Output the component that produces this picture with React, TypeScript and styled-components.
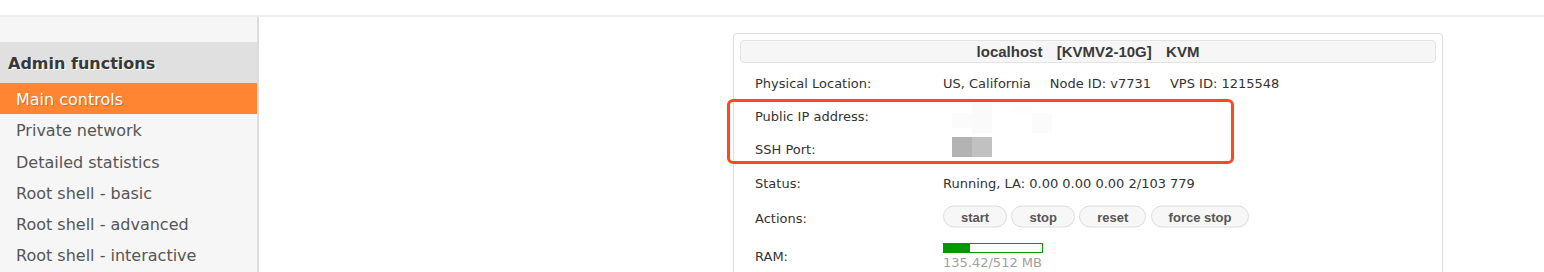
import React from "react";
import styled, { createGlobalStyle } from "styled-components";

const GlobalStyle = createGlobalStyle`
  html, body { margin: 0; padding: 0; background: #ffffff; }
  body { font-family: "DejaVu Sans", Verdana, sans-serif; color: #333; }
  * { box-sizing: border-box; }
`;

const Page = styled.div`
  width: 1544px;
  height: 272px;
  overflow: hidden;
  display: flex;
  flex-direction: column;
`;

const TopBar = styled.div`
  height: 17px;
  flex: none;
  border-bottom: 2px solid #eeeeee;
  background: #ffffff;
`;

const Body = styled.div`
  flex: 1;
  display: flex;
  min-height: 0;
`;

const Sidebar = styled.nav`
  width: 259px;
  flex: none;
  background: #f6f6f6;
  border-right: 2px solid #dddddd;
  padding-top: 25px;
`;

const SideHeading = styled.div`
  height: 41px;
  line-height: 41px;
  padding-top: 1px;
  padding-left: 8px;
  background: #e0e0e0;
  font-size: 16px;
  font-weight: bold;
  color: #383838;
  text-shadow: 1px 1px 0 #ffffff;
  white-space: nowrap;
`;

const SideItem = styled.div<{ $active?: boolean }>`
  height: 31.3px;
  line-height: 31px;
  padding-top: 1px;
  padding-left: 16px;
  font-size: 16px;
  white-space: nowrap;
  color: ${(p) => (p.$active ? "#ffffff" : "#555555")};
  background: ${(p) => (p.$active ? "#ff8533" : "transparent")};
  text-shadow: ${(p) => (p.$active ? "1px 1px 0 rgba(120,50,0,0.35)" : "none")};
`;

const Main = styled.main`
  flex: 1;
  padding-top: 16px;
  padding-left: 474px;
`;

const Panel = styled.section`
  position: relative;
  width: 710px;
  border: 1px solid #dddddd;
  border-radius: 4px;
  padding: 6px 6px 0 6px;
  background: #ffffff;
`;

const PanelHeader = styled.div`
  height: 23px;
  line-height: 21px;
  border: 1px solid #e3e3e3;
  border-radius: 4px;
  background: #f6f6f6;
  text-align: center;
  font-family: "Liberation Sans", Arial, sans-serif;
  font-weight: bold;
  font-size: 15px;
  color: #3a3a3a;
  white-space: pre;
  word-spacing: 0.6px;
`;

const Rows = styled.div`
  margin-top: 3px;
  display: flex;
  flex-direction: column;
`;

const Row = styled.div<{ $h: number }>`
  height: ${(p) => p.$h}px;
  display: grid;
  grid-template-columns: 188px 1fr;
  align-items: center;
  padding-left: 15px;
  padding-top: 1px;
  font-size: 13px;
  color: #333333;
`;

const Label = styled.div`
  white-space: nowrap;
`;

const Value = styled.div`
  white-space: nowrap;
  display: flex;
  flex-direction: column;
  align-items: flex-start;
`;

const InlineValue = styled.div`
  display: flex;
  white-space: nowrap;
`;

const Part = styled.span<{ $gap?: number }>`
  margin-left: ${(p) => p.$gap ?? 0}px;
`;

const Buttons = styled.div`
  display: flex;
  gap: 4.3px;
  transform: translateY(-1.5px);
`;

const ActionButton = styled.button`
  height: 22px;
  padding: 0 17px;
  border: 1px solid #dcdcdc;
  border-radius: 11px;
  background: #f7f7f7;
  font-family: "Liberation Sans", Arial, sans-serif;
  font-weight: bold;
  font-size: 13px;
  color: #555555;
  cursor: pointer;
`;

const Bar = styled.div`
  width: 100px;
  height: 10px;
  border: 1px solid #009900;
  background: #ffffff;
  display: flex;
`;

const BarFill = styled.div`
  height: 100%;
  background: #009900;
`;

const BarText = styled.div`
  margin-top: 2px;
  font-size: 13px;
  line-height: 16px;
  color: #a0a0a0;
`;

const Mosaic = styled.svg<{ $top: number }>`
  display: block;
  margin-left: 9px;
  transform: translateY(${(p) => p.$top}px);
`;

const Highlight = styled.div`
  position: absolute;
  left: -7px;
  top: 65px;
  width: 507px;
  height: 65px;
  border: 3px solid #fd4a17;
  border-radius: 6px;
  pointer-events: none;
`;

const menu = [
  "Private network",
  "Detailed statistics",
  "Root shell - basic",
  "Root shell - advanced",
  "Root shell - interactive",
];

export default function App() {
  const used = 135.42;
  const total = 512;
  return (
    <>
      <GlobalStyle />
      <Page>
        <TopBar />
        <Body>
          <Sidebar>
            <SideHeading>Admin functions</SideHeading>
            <SideItem $active>Main controls</SideItem>
            {menu.map((m) => (
              <SideItem key={m}>{m}</SideItem>
            ))}
          </Sidebar>
          <Main>
            <Panel>
              <PanelHeader>{"localhost   [KVMV2-10G]   KVM"}</PanelHeader>
              <Rows>
                <Row $h={33.3}>
                  <Label>Physical Location:</Label>
                  <InlineValue>
                    <Part>US, California</Part>
                    <Part $gap={19}>Node ID: v7731</Part>
                    <Part $gap={19}>VPS ID: 1215548</Part>
                  </InlineValue>
                </Row>
                <Row $h={33.3}>
                  <Label>Public IP address:</Label>
                  <Value>
                    <Mosaic $top={2} width="100" height="30" viewBox="0 0 100 30">
                      <rect x="0" y="10" width="20" height="15" fill="#fbfbfb" />
                      <rect x="20" y="0" width="20" height="30" fill="#fafafa" />
                      <rect x="60" y="3" width="20" height="7" fill="#fdfdfd" />
                      <rect x="80" y="10" width="20" height="20" fill="#fbfbfb" />
                    </Mosaic>
                  </Value>
                </Row>
                <Row $h={33.3}>
                  <Label>SSH Port:</Label>
                  <Value>
                    <Mosaic $top={-3} width="40" height="20" viewBox="0 0 40 20">
                      <rect x="0" y="0" width="20" height="20" fill="#b3b3b3" />
                      <rect x="20" y="0" width="20" height="20" fill="#c1c1c1" />
                    </Mosaic>
                  </Value>
                </Row>
                <Row $h={33.3}>
                  <Label>Status:</Label>
                  <Value>Running, LA: 0.00 0.00 0.00 2/103 779</Value>
                </Row>
                <Row $h={37}>
                  <Label>Actions:</Label>
                  <Buttons>
                    <ActionButton>start</ActionButton>
                    <ActionButton>stop</ActionButton>
                    <ActionButton>reset</ActionButton>
                    <ActionButton>force stop</ActionButton>
                  </Buttons>
                </Row>
                <Row $h={40}>
                  <Label>RAM:</Label>
                  <Value>
                    <Bar>
                      <BarFill style={{ width: `${(used / total) * 100}%` }} />
                    </Bar>
                    <BarText>135.42/512 MB</BarText>
                  </Value>
                </Row>
              </Rows>
              <Highlight />
            </Panel>
          </Main>
        </Body>
      </Page>
    </>
  );
}
